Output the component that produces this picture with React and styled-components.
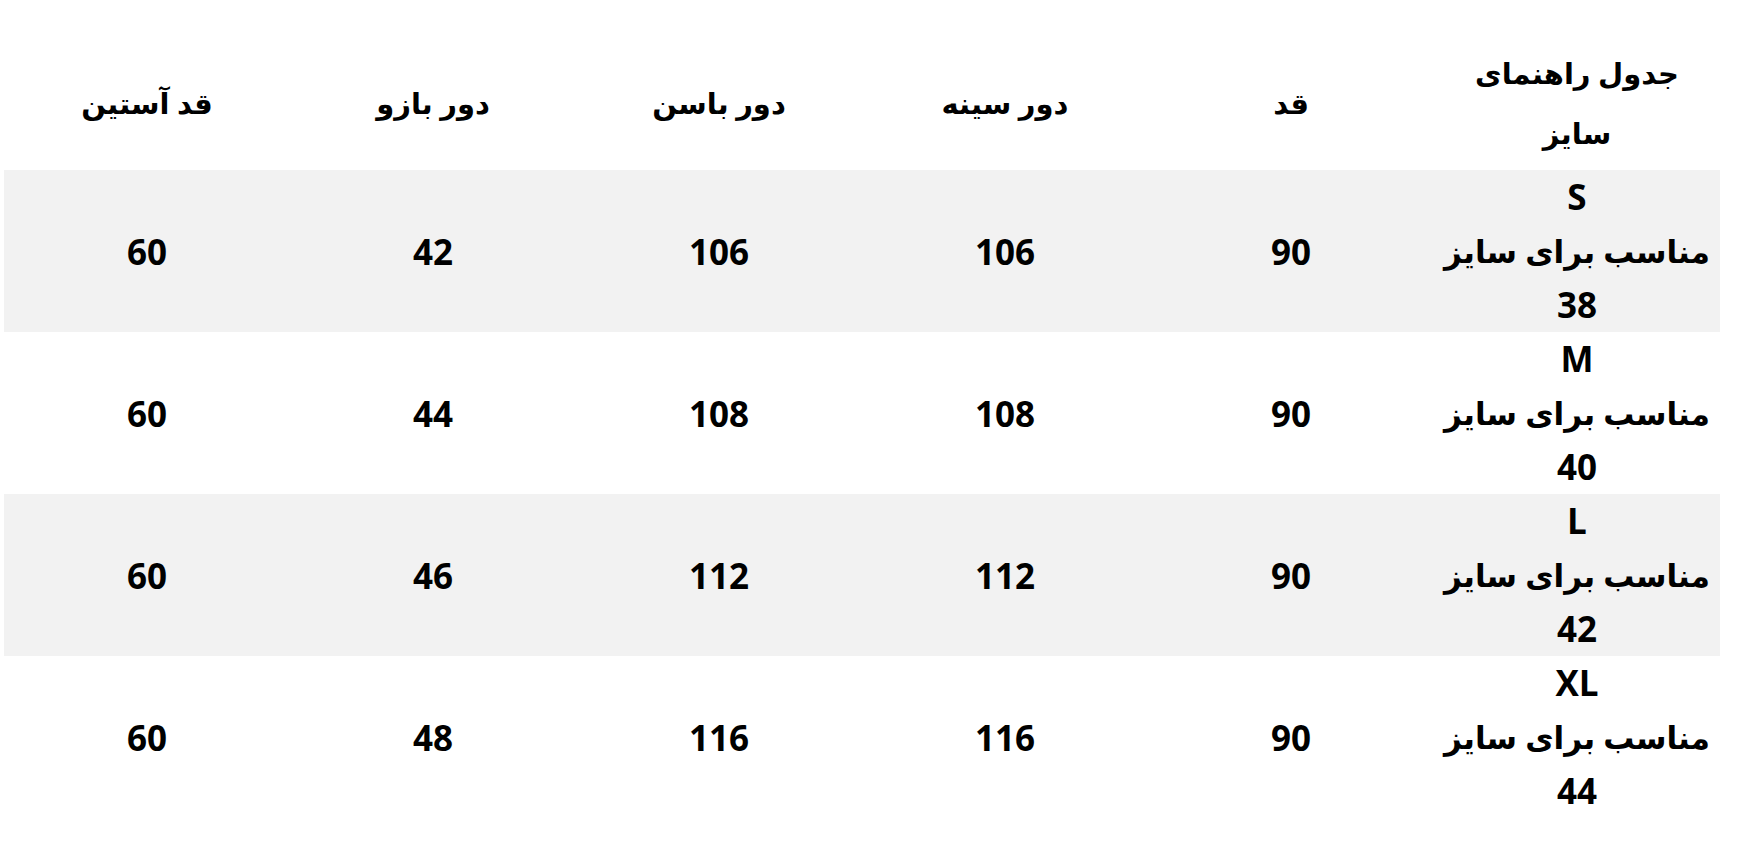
import React from "react";
import styled, { createGlobalStyle } from "styled-components";

const GlobalStyle = createGlobalStyle`
  html, body {
    margin: 0;
    padding: 0;
    background: #ffffff;
  }
  body {
    font-family: "Open Sans", "DejaVu Sans", sans-serif;
    color: #000;
  }
`;

const columns = ["جدول راهنمای\nسایز", "قد", "دور سینه", "دور باسن", "دور بازو", "قد آستین"];

const rows = [
  { size: "S", fit: "38", values: ["90", "106", "106", "42", "60"] },
  { size: "M", fit: "40", values: ["90", "108", "108", "44", "60"] },
  { size: "L", fit: "42", values: ["90", "112", "112", "46", "60"] },
  { size: "XL", fit: "44", values: ["90", "116", "116", "48", "60"] },
];

function App() {
  return (
    <Page>
      <GlobalStyle />
      <Table dir="rtl">
        <thead>
          <tr>
            {columns.map((c) => (
              <HeadCell key={c}>{c}</HeadCell>
            ))}
          </tr>
        </thead>
        <tbody>
          {rows.map((row, i) => (
            <Row key={row.size} $shaded={i % 2 === 0}>
              <SizeCell>
                <Strong>{row.size}</Strong>
                <FitText>مناسب برای سایز</FitText>
                <Strong>{row.fit}</Strong>
              </SizeCell>
              {row.values.map((v, j) => (
                <Cell key={j}>{v}</Cell>
              ))}
            </Row>
          ))}
        </tbody>
      </Table>
    </Page>
  );
}

export default App;

const Page = styled.div`
  padding: 40px 21px 0 4px;
`;

const Table = styled.table`
  width: 1716px;
  border-collapse: collapse;
  table-layout: fixed;
`;

const HeadCell = styled.th`
  height: 126px;
  padding: 0 0 4px;
  font-size: 29px;
  font-weight: 700;
  line-height: 60px;
  white-space: pre-line;
  text-align: center;
  vertical-align: middle;
`;

const Row = styled.tr`
  background: ${(p) => (p.$shaded ? "#f2f2f2" : "#ffffff")};
`;

const Cell = styled.td`
  height: 162px;
  padding: 0;
  font-size: 35px;
  font-weight: 700;
  text-align: center;
  vertical-align: middle;
`;

const SizeCell = styled(Cell)`
  line-height: 54px;
`;

const Strong = styled.div`
  font-weight: 700;
`;

const FitText = styled.div`
  font-size: 31px;
  font-weight: 700;
`;
